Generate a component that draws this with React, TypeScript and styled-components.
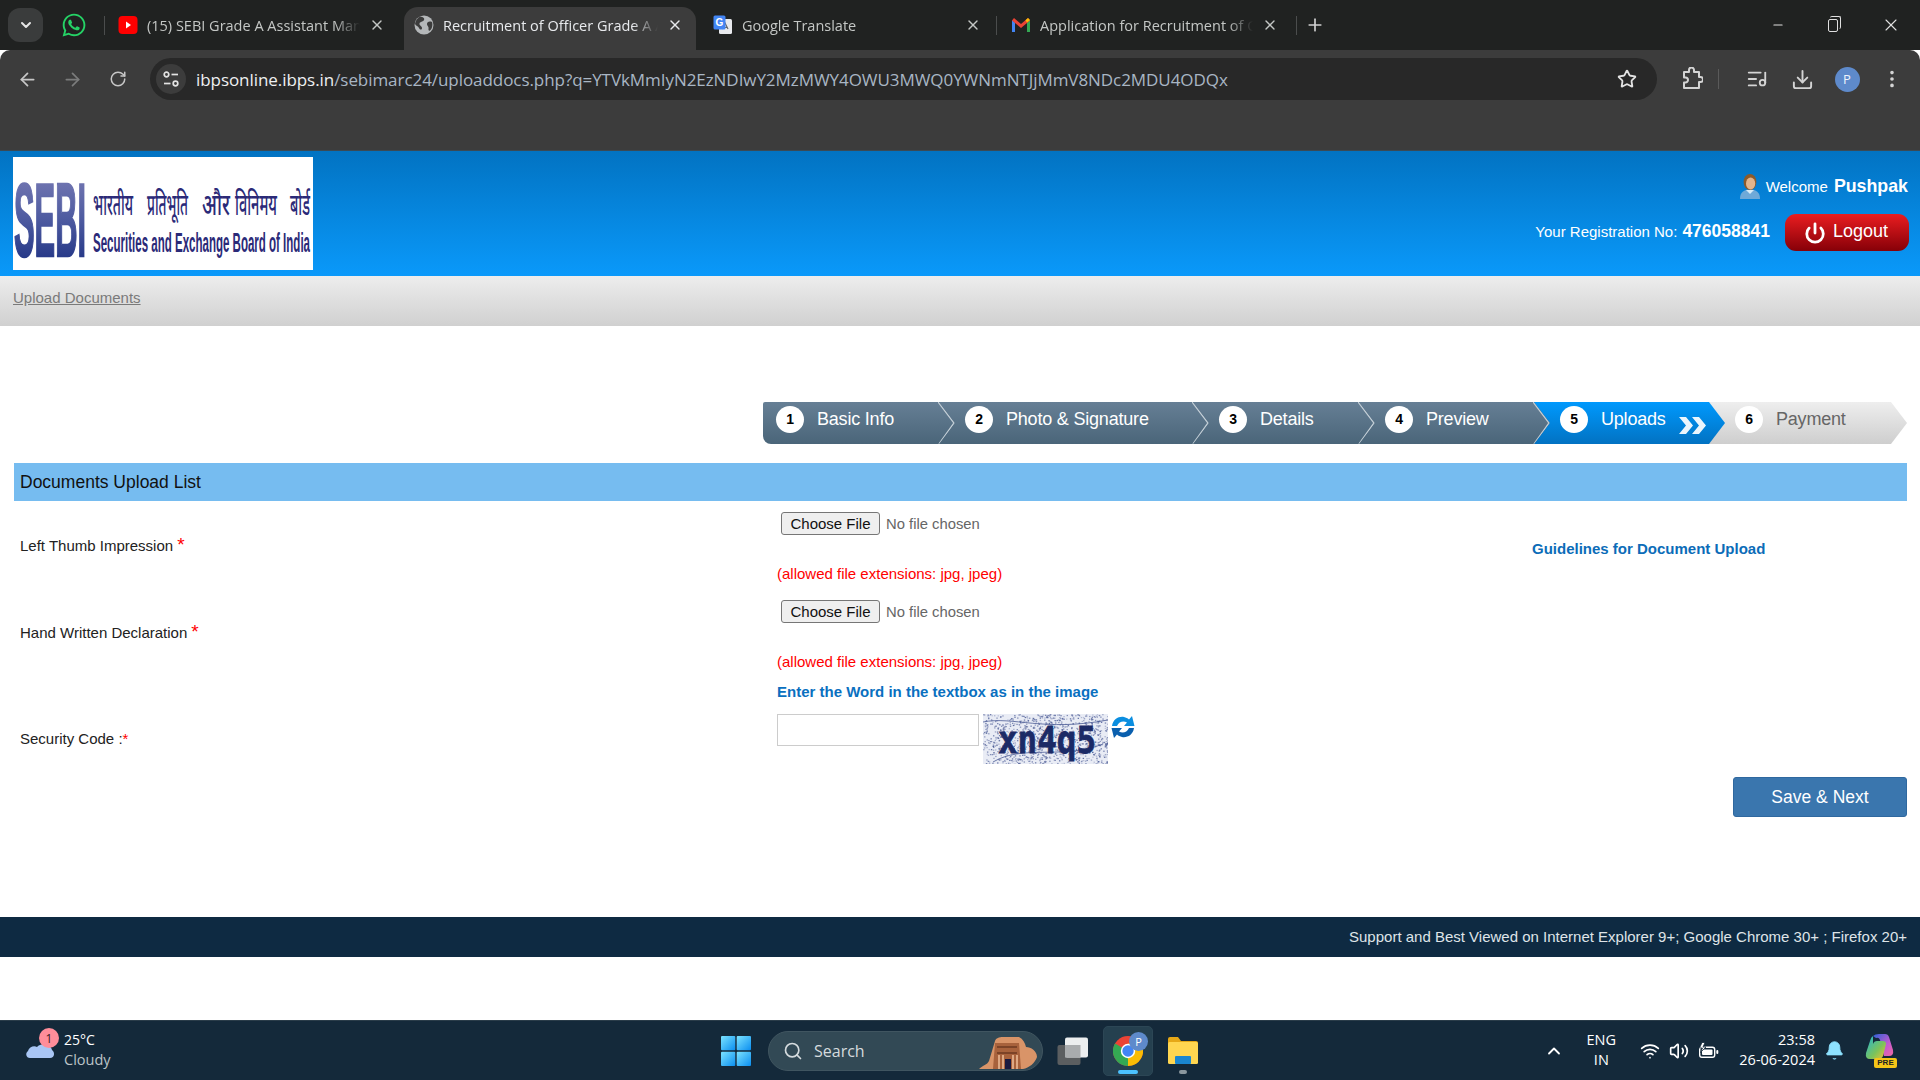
import styled, { createGlobalStyle } from "styled-components"
import {
  ArrowLeft,
  ArrowRight,
  Bell,
  ChevronDown,
  ChevronUp,
  Download,
  ListMusic,
  Minus,
  MoreVertical,
  Plus,
  Power,
  RotateCw,
  Search as SearchGlyph,
  Star,
  Volume2,
  Wifi,
  X,
} from "lucide-react"
import { FaWhatsapp } from "react-icons/fa"

const GlobalStyle = createGlobalStyle`
  html, body {
    margin: 0;
    padding: 0;
    height: 100%;
    overflow: hidden;
    background: #fff;
    font-family: "Liberation Sans", Arial, sans-serif;
  }
  * { box-sizing: border-box; }
`

const CHROME_FONT = `"Open Sans", "Noto Sans", sans-serif`

const Shell = styled.div`
  width: 1920px;
  height: 1080px;
  display: flex;
  flex-direction: column;
`

/* browser chrome */

const TabStrip = styled.div`
  height: 50px;
  flex: none;
  background: #202221;
  display: flex;
  align-items: flex-end;
  padding-left: 8px;
  font-family: ${CHROME_FONT};
`

const TabSearch = styled.div`
  width: 35px;
  height: 34px;
  margin-bottom: 8px;
  border-radius: 12px;
  background: #3a3c3c;
  color: #e6e6e6;
  display: flex;
  align-items: center;
  justify-content: center;
`

const PinnedTab = styled.div`
  width: 61px;
  height: 50px;
  display: flex;
  align-items: center;
  justify-content: center;
  color: #25d366;
`

const Tab = styled.div<{ $w: number; $l: number; $r: number; $active?: boolean; $sep?: boolean }>`
  position: relative;
  width: ${p => p.$w}px;
  height: ${p => (p.$active ? 43 : 50)}px;
  padding: 0 ${p => p.$r}px ${p => (p.$active ? 7 : 0)}px ${p => p.$l}px;
  display: flex;
  align-items: center;
  gap: 9px;
  font-size: 14.5px;
  color: ${p => (p.$active ? "#e8eaed" : "#c4c7c5")};
  background: ${p => (p.$active ? "#3c3c3c" : "transparent")};
  border-radius: ${p => (p.$active ? "14px 14px 0 0" : "0")};
  &::before {
    content: "";
    display: ${p => (p.$sep ? "block" : "none")};
    position: absolute;
    left: 0;
    top: 16px;
    width: 1px;
    height: 19px;
    background: #4b4d4d;
  }
`

const TabTitle = styled.span`
  flex: 1;
  min-width: 0;
  white-space: nowrap;
  overflow: hidden;
  mask-image: linear-gradient(to right, #000 88%, transparent 100%);
`

const NewTab = styled.div`
  width: 38px;
  height: 50px;
  display: flex;
  align-items: center;
  justify-content: center;
  color: #d0d0d0;
  position: relative;
  &::before {
    content: "";
    position: absolute;
    left: 0;
    top: 16px;
    width: 1px;
    height: 19px;
    background: #4b4d4d;
  }
`

const WindowControls = styled.div`
  margin-left: auto;
  height: 50px;
  padding-right: 19px;
  display: flex;
  align-items: center;
  gap: 43px;
  color: #e0e0e0;
`

const RestoreIcon = styled.span`
  position: relative;
  display: block;
  width: 10px;
  height: 13px;
  border: 1.3px solid #e0e0e0;
  border-radius: 2px;
  &::after {
    content: "";
    position: absolute;
    top: -4px;
    left: 1px;
    width: 10px;
    height: 12px;
    border-top: 1.3px solid #e0e0e0;
    border-right: 1.3px solid #e0e0e0;
    border-radius: 2px;
  }
`

const Toolbar = styled.div`
  height: 100px;
  flex: none;
  background: #3c3c3c;
  border-radius: 10px 10px 0 0;
  padding: 8px 0 0 10px;
  display: flex;
  align-items: flex-start;
  font-family: ${CHROME_FONT};
`

const NavButton = styled.div<{ $dim?: boolean }>`
  width: 45px;
  margin-left: -5px;
  margin-right: 5px;
  height: 42px;
  display: flex;
  align-items: center;
  justify-content: center;
  color: ${p => (p.$dim ? "#7b7c7c" : "#c7c7c7")};
  &:nth-child(3) {
    margin-right: 0;
  }
`

const AddressBar = styled.div`
  margin-left: 10px;
  width: 1507px;
  height: 42px;
  border-radius: 21px;
  background: #282828;
  display: flex;
  align-items: center;
  padding: 0 20px 0 6px;
`

const SiteInfo = styled.div`
  width: 30px;
  height: 30px;
  border-radius: 50%;
  background: #3c3c3c;
  color: #e3e3e3;
  display: flex;
  align-items: center;
  justify-content: center;
  flex: none;
`

const Url = styled.div`
  margin-left: 10px;
  flex: 1;
  font-size: 17px;
  letter-spacing: -0.06px;
  color: #a9b6c4;
  white-space: nowrap;
  overflow: hidden;
  b {
    font-weight: 400;
    color: #eef0f2;
  }
`

const ToolIcons = styled.div`
  margin-left: 21px;
  height: 42px;
  display: flex;
  align-items: center;
  color: #d4d4d4;
`

const ToolSlot = styled.div<{ $w: number }>`
  width: ${p => p.$w}px;
  display: flex;
  align-items: center;
  justify-content: center;
`

const ToolDivider = styled.div`
  width: 1px;
  height: 20px;
  background: #5a5a5a;
  margin: 0 16px 0 12px;
`

const Avatar = styled.div`
  width: 25px;
  height: 25px;
  border-radius: 50%;
  background: #5e8acb;
  color: #eef3fb;
  font-size: 13px;
  display: flex;
  align-items: center;
  justify-content: center;
`

/* site header */

const SiteHeader = styled.header`
  height: 126px;
  flex: none;
  background: linear-gradient(to bottom, #0273c2, #0a99fa);
  border-top: 1px solid #3a4a55;
  padding: 6px 12px 0 13px;
  display: flex;
  justify-content: space-between;
  align-items: flex-start;
  color: #fff;
`

const LogoBox = styled.div`
  width: 300px;
  height: 113px;
  background: #fff;
`

const UserPanel = styled.div`
  padding-top: 15px;
  display: flex;
  flex-direction: column;
  align-items: flex-end;
`

const WelcomeLine = styled.div`
  height: 28px;
  display: flex;
  align-items: center;
  gap: 5px;
  font-size: 15px;
  b {
    font-size: 17.8px;
    margin-left: 1px;
  }
`

const RegLine = styled.div`
  margin-top: 14px;
  display: flex;
  align-items: center;
  font-size: 15px;
  b {
    font-size: 17.5px;
    margin-left: 5px;
  }
`

const RegText = styled.span`
  margin-top: -3px;
`

const LogoutButton = styled.div`
  width: 124px;
  height: 37px;
  margin-left: 15px;
  margin-right: -1px;
  border-radius: 11px;
  background: linear-gradient(to bottom, #ea1d20, #860008);
  display: flex;
  align-items: center;
  padding-left: 19px;
  gap: 7px;
  font-size: 18px;
  span {
    margin-top: -3px;
  }
`

const Breadcrumb = styled.nav`
  height: 50px;
  flex: none;
  background: linear-gradient(to bottom, #ededed, #d0d0d0);
  padding: 13px 0 0 13px;
  font-size: 15px;
  color: #7a7a7a;
  span {
    text-decoration: underline;
  }
`

/* page body */

const Main = styled.main`
  flex: 1;
  display: flex;
  flex-direction: column;
  min-height: 0;
`

const Steps = styled.div`
  margin: 76px 0 0 763px;
  display: flex;
  height: 42px;
`

const Step = styled.div<{ $w: number; $z: number; $first?: boolean; $kind: "done" | "active" | "next" }>`
  position: relative;
  z-index: ${p => p.$z};
  flex: none;
  width: ${p => p.$w}px;
  margin-right: -16px;
  height: 42px;
  padding-left: ${p => (p.$first ? 13 : 26)}px;
  padding-bottom: 8px;
  display: flex;
  align-items: center;
  gap: 13px;
  font-size: 18px;
  letter-spacing: -0.2px;
  color: ${p => (p.$kind === "next" ? "#666" : "#fff")};
  background: ${p =>
    p.$kind === "done"
      ? "linear-gradient(to bottom, #667f95, #4a6579)"
      : p.$kind === "active"
        ? "linear-gradient(to bottom, #0099fd, #0272c2)"
        : "linear-gradient(to bottom, #eeeeee, #cecece)"};
  clip-path: polygon(0 0, calc(100% - 16px) 0, 100% 50%, calc(100% - 16px) 100%, 0 100%);
  border-bottom-left-radius: ${p => (p.$first ? 8 : 0)}px;
  border-top-left-radius: ${p => (p.$first ? 2 : 0)}px;
`

const StepNumber = styled.span`
  width: 28px;
  height: 27px;
  border-radius: 50%;
  background: #fff;
  color: #000;
  font-size: 14px;
  font-weight: 700;
  display: flex;
  align-items: center;
  justify-content: center;
  flex: none;
`

const StepEdge = styled.svg`
  position: absolute;
  right: 0;
  top: 0;
`

const ActiveMark = styled.svg`
  position: absolute;
  right: 17px;
  top: 14px;
`

const SectionBar = styled.h2`
  margin: 19px 13px 0 14px;
  height: 38px;
  background: #76bcf0;
  color: #111;
  font-size: 17.5px;
  font-weight: 400;
  line-height: 38px;
  padding-left: 6px;
`

const FormGrid = styled.div`
  padding: 11px 13px 0 14px;
`

const FormRow = styled.div<{ $h: number; $labelTop: number }>`
  display: grid;
  grid-template-columns: 763px 755px 1fr;
  height: ${p => p.$h}px;
  --label-top: ${p => p.$labelTop}px;
`

const FieldLabel = styled.div`
  padding: var(--label-top) 0 0 6px;
  font-size: 15px;
  color: #222;
  em {
    font-style: normal;
    color: #f00;
    font-size: 19px;
    margin-left: 4px;
    line-height: 10px;
  }
`

const FileField = styled.div`
  display: flex;
  flex-direction: column;
`

const FilePick = styled.div`
  margin-left: 4px;
  display: flex;
  align-items: center;
  gap: 6px;
  font-size: 14.8px;
  color: #666;
`

const ChooseButton = styled.button`
  width: 99px;
  height: 23px;
  padding: 0;
  border: 1px solid #767676;
  border-radius: 3px;
  background: #efefef;
  color: #111;
  font: 400 15px "Liberation Sans", Arial, sans-serif;
`

const AllowedNote = styled.div`
  margin-top: 30px;
  font-size: 15px;
  color: #f00;
`

const GuideLink = styled.div`
  padding-top: 28px;
  font-size: 15px;
  font-weight: 700;
  color: #0b6cb8;
`

const CaptchaHint = styled.div`
  margin: 3px 0 0 763px;
  font-size: 15px;
  font-weight: 700;
  line-height: 17px;
  color: #0a70bf;
`

const CaptchaRow = styled.div`
  margin-top: 14px;
  display: grid;
  grid-template-columns: 763px 1fr;
  align-items: center;
  height: 50px;
`

const SecurityLabel = styled.div`
  padding: 0 0 2px 6px;
  font-size: 15px;
  color: #222;
  span {
    color: #f00;
  }
`

const CaptchaField = styled.div`
  display: flex;
  align-items: flex-start;
`

const CaptchaInput = styled.input`
  width: 202px;
  height: 32px;
  border: 1px solid #ccc;
  background: #fff;
  padding: 0 6px;
`

const CaptchaPicture = styled.svg`
  margin-left: 4px;
  display: block;
`

const RefreshIcon = styled.svg`
  margin-left: 3px;
  margin-top: 1px;
`

const SaveRow = styled.div`
  display: flex;
  justify-content: flex-end;
  margin: 13px 13px 0 0;
`

const SaveButton = styled.div`
  width: 174px;
  height: 40px;
  border-radius: 3px;
  background: #3a76ae;
  border: 1px solid #2f689f;
  color: #fff;
  font-size: 17.5px;
  display: flex;
  align-items: center;
  justify-content: center;
`

const PageFooter = styled.footer`
  margin-top: 100px;
  height: 40px;
  background: #0e2a42;
  color: #dfe4e8;
  font-size: 15px;
  display: flex;
  align-items: center;
  justify-content: flex-end;
  padding: 0 13px 2px 0;
`

/* windows taskbar */

const Taskbar = styled.div`
  height: 60px;
  flex: none;
  background: #14293a;
  border-top: 1px solid #2a3c49;
  display: flex;
  align-items: center;
  font-family: ${CHROME_FONT};
  color: #fff;
`

const WeatherArea = styled.div`
  width: 721px;
  flex: none;
  display: flex;
  align-items: center;
  padding-left: 25px;
  gap: 9px;
`

const WeatherIcon = styled.div`
  position: relative;
  width: 30px;
  height: 36px;
  margin-top: 3px;
`

const WeatherCloud = styled.svg`
  position: absolute;
  top: 3px;
  left: 0;
`

const NotifyBadge = styled.span`
  position: absolute;
  top: -6px;
  right: -4px;
  width: 20px;
  height: 20px;
  border-radius: 50%;
  background: #ff8d9a;
  color: #3a2024;
  font-size: 12px;
  display: flex;
  align-items: center;
  justify-content: center;
`

const WeatherText = styled.div`
  font-size: 14px;
  line-height: 20px;
  margin-top: -2px;
  small {
    display: block;
    font-size: 14.5px;
    color: #bcc4c8;
  }
`

const CenterIcons = styled.div`
  display: flex;
  align-items: center;
`

const SearchPill = styled.div`
  position: relative;
  margin-left: 17px;
  width: 275px;
  height: 40px;
  border-radius: 20px;
  background: #324955;
  border: 1px solid #405560;
  display: flex;
  align-items: center;
  padding-left: 14px;
  gap: 11px;
  color: #d5dbde;
  font-size: 16px;
`

const SearchArt = styled.svg`
  position: absolute;
  right: 3px;
  top: 3px;
`

const TaskIcon = styled.div<{ $w: number; $active?: boolean }>`
  position: relative;
  width: ${p => p.$w}px;
  height: 50px;
  display: flex;
  align-items: center;
  justify-content: center;
  border-radius: 5px;
  background: ${p => (p.$active ? "#25404f" : "transparent")};
  border: 1px solid ${p => (p.$active ? "#2c4655" : "transparent")};
`

const RunDot = styled.span<{ $w: number; $color: string }>`
  position: absolute;
  bottom: 1px;
  left: 50%;
  transform: translateX(-50%);
  width: ${p => p.$w}px;
  height: 4px;
  border-radius: 2px;
  background: ${p => p.$color};
`

const ProfileBadge = styled.span`
  position: absolute;
  top: 5px;
  right: 4px;
  width: 19px;
  height: 19px;
  border-radius: 50%;
  background: #5e8acb;
  font-size: 11px;
  display: flex;
  align-items: center;
  justify-content: center;
`

const Tray = styled.div`
  margin-left: auto;
  display: flex;
  align-items: center;
  color: #fff;
`

const TrayLang = styled.div`
  width: 58px;
  margin-left: 8px;
  text-align: center;
  font-size: 14.5px;
  line-height: 20px;
  margin-top: -2px;
`

const TrayIcons = styled.div`
  margin-left: 10px;
  display: flex;
  align-items: center;
  gap: 9px;
`

const Clock = styled.div`
  margin-left: 20px;
  text-align: right;
  font-size: 14.5px;
  line-height: 20px;
  margin-top: -2px;
`

const BellSlot = styled.div`
  margin-left: 9px;
  color: #8ee2ff;
  display: flex;
`

const CopilotSlot = styled.div`
  position: relative;
  margin: 0 23px 0 20px;
  width: 32px;
  height: 34px;
`

const PreTag = styled.span`
  position: absolute;
  right: 0;
  bottom: 0;
  width: 23px;
  height: 10px;
  border-radius: 2px;
  background: #f5c518;
  color: #222;
  font-size: 8px;
  line-height: 10px;
  font-weight: 700;
  text-align: center;
  font-family: "Liberation Sans", Arial, sans-serif;
`

/* drawings */

function YoutubeIcon() {
  return (
    <svg width="20" height="20" viewBox="0 0 20 20">
      <rect x="0.5" y="1" width="19" height="18" rx="4" fill="#f00" />
      <path d="M8 6.5 L13 10 L8 13.5 Z" fill="#fff" />
    </svg>
  )
}

function SiteGlobe() {
  return (
    <svg width="20" height="20" viewBox="0 0 20 20">
      <circle cx="10" cy="10" r="9.5" fill="#b4b7b9" />
      <path d="M6 1.5 C9 2 11 3 10 5 C9 7 6 6.5 5.5 8.5 C5 10.5 8 11 8 13 C8 15 6 15 5 13 C4 11 2 11 1 9 C1.5 6 3 3 6 1.5 Z" fill="#3c3c3c" />
      <path d="M18 7 C15 6 13 7 13 9 C13 11 15 11 14.5 14 C14.3 15.5 15 16 16 15.5 C18 14 19 10 18 7 Z" fill="#3c3c3c" />
    </svg>
  )
}

function TranslateIcon() {
  return (
    <svg width="20" height="20" viewBox="0 0 20 20">
      <rect x="6" y="4" width="13" height="15" rx="1.5" fill="#e8eaed" />
      <path d="M9 14l3-6 3 6M10 12.5h4" stroke="#5f6368" strokeWidth="1.2" fill="none" />
      <rect x="0.5" y="0.5" width="12" height="14" rx="1.5" fill="#4285f4" />
      <text x="6.5" y="11" fontSize="10" fontWeight="700" textAnchor="middle" fill="#fff" fontFamily="Liberation Sans">
        G
      </text>
    </svg>
  )
}

function GmailIcon() {
  return (
    <svg width="20" height="16" viewBox="0 0 20 16">
      <path d="M1 15V3l3 2.5V15z" fill="#4285f4" />
      <path d="M16 15V5.5L19 3v12z" fill="#34a853" />
      <path d="M1 3.5 L3 1 L10 7 L17 1 L19 3.5 L10 11z" fill="#ea4335" />
      <path d="M16 5.5 L19 3 L17 1 L14.5 3.2z" fill="#fbbc04" />
    </svg>
  )
}

function TuneIcon() {
  return (
    <svg width="18" height="18" viewBox="0 0 18 18" fill="none" stroke="currentColor" strokeWidth="1.7">
      <circle cx="4.5" cy="4.5" r="2.3" />
      <path d="M9.5 4.5 H16" />
      <path d="M2 13.5 H8.5" />
      <circle cx="13.5" cy="13.5" r="2.3" />
    </svg>
  )
}

function ExtensionIcon() {
  return (
    <svg width="22" height="24" viewBox="0 0 22 24" fill="none" stroke="currentColor" strokeWidth="2" strokeLinejoin="round">
      <path d="M3 5 H8 V3 A2.5 2.5 0 0 1 13 3 V5 H18 V10 H19.5 A2.5 2.5 0 0 1 19.5 15 H18 V21 H3 V15.5 H4.5 A2.5 2.5 0 0 0 4.5 10.5 H3 Z" />
    </svg>
  )
}

function UserAvatar() {
  return (
    <svg width="22" height="27" viewBox="0 0 22 27">
      <path d="M1 26 C1 19 5 16.5 11 16.5 C17 16.5 21 19 21 26 Z" fill="#6fa9d8" />
      <path d="M7 17 L11 21 L15 17 Z" fill="#d9ecf8" />
      <ellipse cx="11" cy="9" rx="6.4" ry="8" fill="#8a5a2b" />
      <ellipse cx="11.6" cy="10.5" rx="4.6" ry="6" fill="#e2b48c" />
    </svg>
  )
}

const HINDI_WORDS = [
  { word: "भारतीय", x: 80, w: 40 },
  { word: "प्रतिभूति", x: 134, w: 41 },
  { word: "और", x: 189, w: 28 },
  { word: "विनिमय", x: 222, w: 42 },
  { word: "बोर्ड", x: 277, w: 20 },
]

function SebiLogo() {
  return (
    <svg width="300" height="113" viewBox="0 0 300 113">
      <defs>
        <linearGradient id="sebiFill" x1="0" y1="0" x2="0" y2="1">
          <stop offset="0" stopColor="#8081b8" />
          <stop offset="0.5" stopColor="#4d5aa0" />
          <stop offset="1" stopColor="#13287c" />
        </linearGradient>
      </defs>
      <text
        x="1"
        y="99"
        fontFamily="Liberation Sans"
        fontWeight="700"
        fontSize="104"
        textLength="72"
        lengthAdjust="spacingAndGlyphs"
        fill="url(#sebiFill)"
        stroke="url(#sebiFill)"
        strokeWidth="2.5"
      >
        SEBI
      </text>
      <g transform="translate(0,58) scale(1,1.5)">
        {HINDI_WORDS.map(h => (
          <text
            key={h.word}
            x={h.x}
            y="0"
            fontFamily="Noto Sans Devanagari, Noto Sans, Lohit Devanagari, sans-serif"
            fontSize="20"
            fontWeight="500"
            textLength={h.w}
            lengthAdjust="spacingAndGlyphs"
            fill="#2b2a78"
          >
            {h.word}
          </text>
        ))}
      </g>
      <text
        x="80"
        y="95"
        fontFamily="Liberation Sans"
        fontWeight="700"
        fontSize="27"
        textLength="217"
        lengthAdjust="spacingAndGlyphs"
        fill="#2b2a78"
      >
        Securities and Exchange Board of India
      </text>
    </svg>
  )
}

function seeded(n: number) {
  const x = Math.sin(n * 12.9898) * 43758.5453
  return x - Math.floor(x)
}

const NOISE = Array.from({ length: 1100 }, (_, i) => ({
  x: seeded(i + 1) * 125,
  y: seeded(i + 1000) * 50,
  o: 0.25 + seeded(i + 2000) * 0.6,
}))

function CaptchaImage() {
  return (
    <CaptchaPicture width="125" height="50" viewBox="0 0 125 50">
      <rect width="125" height="50" fill="#e9ecf5" />
      {NOISE.map((d, i) => (
        <rect key={i} x={d.x} y={d.y} width="1.4" height="1.2" fill="#4a5a94" opacity={d.o} />
      ))}
      <path d="M0 8 C30 2 60 18 125 6 M10 48 C40 30 80 46 120 30" stroke="#4a5a94" strokeWidth="0.8" fill="none" />
      <text
        x="15"
        y="39"
        fontFamily="DejaVu Sans Mono"
        fontWeight="700"
        fontSize="37"
        textLength="98"
        lengthAdjust="spacingAndGlyphs"
        fill="#1b2a66"
        stroke="#1b2a66"
        strokeWidth="0.8"
      >
        xn4q5
      </text>
    </CaptchaPicture>
  )
}

function CaptchaRefresh() {
  return (
    <RefreshIcon width="24" height="24" viewBox="0 0 24 24">
      <path
        d="M1 11 C2 4 8 1 13 2 C15 2.4 16.5 3.2 18 4.5 L21 1 L23.5 11 L13 11 L16 7.5 C12.5 5.5 8 6.5 6 11 Z"
        fill="#0b8ee0"
      />
      <path
        d="M23 13 C22 20 16 23 11 22 C9 21.6 7.5 20.8 6 19.5 L3 23 L0.5 13 L11 13 L8 16.5 C11.5 18.5 16 17.5 18 13 Z"
        fill="#0a5fae"
      />
    </RefreshIcon>
  )
}

function WindowsLogo() {
  return (
    <svg width="30" height="30" viewBox="0 0 30 30">
      <defs>
        <linearGradient id="winFill" x1="0" y1="0" x2="1" y2="1">
          <stop offset="0" stopColor="#7ce3ff" />
          <stop offset="1" stopColor="#0a8ef0" />
        </linearGradient>
      </defs>
      <rect x="0" y="0" width="14.3" height="14.3" rx="1" fill="url(#winFill)" />
      <rect x="15.7" y="0" width="14.3" height="14.3" rx="1" fill="url(#winFill)" />
      <rect x="0" y="15.7" width="14.3" height="14.3" rx="1" fill="url(#winFill)" />
      <rect x="15.7" y="15.7" width="14.3" height="14.3" rx="1" fill="url(#winFill)" />
    </svg>
  )
}

function TaskViewIcon() {
  return (
    <svg width="32" height="28" viewBox="0 0 32 28">
      <rect x="0.5" y="8" width="23" height="20" rx="2" fill="#5b5e60" />
      <rect x="8" y="0.5" width="23" height="20" rx="2" fill="#eceeef" />
      <rect x="8" y="8" width="15.5" height="12.5" fill="#a9acae" />
    </svg>
  )
}

function ChromeLogo() {
  return (
    <svg width="30" height="30" viewBox="0 0 30 30">
      <circle cx="15" cy="15" r="15" fill="#ea4335" />
      <path d="M15 15 L2 7.5 A15 15 0 0 0 15 30 Z" fill="#34a853" />
      <path d="M15 15 L15 30 A15 15 0 0 0 28 7.5 L15 7.5 Z" fill="#fbbc04" />
      <circle cx="15" cy="15" r="7.2" fill="#fff" />
      <circle cx="15" cy="15" r="5.7" fill="#4285f4" />
    </svg>
  )
}

function ExplorerIcon() {
  return (
    <svg width="30" height="27" viewBox="0 0 30 27">
      <path d="M0 2 Q0 0 2 0 H10 L13 4 H28 Q30 4 30 6 V10 H0 Z" fill="#e6a817" />
      <rect x="0" y="5" width="30" height="22" rx="1.5" fill="#ffd650" />
      <rect x="7" y="19" width="16" height="8" rx="1" fill="#1a86d0" />
    </svg>
  )
}

function TempleArt() {
  return (
    <SearchArt width="60" height="34" viewBox="0 0 60 34">
      <path d="M0 34 C4 30 8 30 10 26 L16 6 C17 3 20 2 24 2 H40 C44 4 46 8 47 12 C52 12 58 16 58 22 C56 28 50 33 44 34 Z" fill="#d99468" />
      <path d="M16 8 H40 L42 34 H14 Z" fill="#a8623c" />
      <path d="M18 12 H38 M18 18 H38" stroke="#6e3a20" strokeWidth="1.5" />
      <path d="M20 20 V34 M24 20 V34 M34 20 V34 M38 20 V34" stroke="#f0c09a" strokeWidth="1.5" />
      <rect x="26" y="24" width="6" height="10" fill="#1a1a40" />
    </SearchArt>
  )
}

function BatteryCharge() {
  return (
    <svg width="21" height="18" viewBox="0 0 21 18" fill="none">
      <rect x="1.7" y="5.2" width="15" height="10" rx="2.2" stroke="#fff" strokeWidth="1.4" />
      <rect x="4" y="7.5" width="10.5" height="5.5" rx="1" fill="#fff" />
      <rect x="18.3" y="8" width="2" height="4" rx="1" fill="#fff" />
      <path d="M4 0.5 L1.5 6 H4.5 L2.5 10.5 L8 5 H5 L7 0.5 Z" fill="#fff" stroke="#14293a" strokeWidth="0.8" />
    </svg>
  )
}

function CopilotMark() {
  return (
    <svg width="29" height="27" viewBox="0 0 29 27">
      <defs>
        <linearGradient id="copA" x1="0" y1="0" x2="1" y2="1">
          <stop offset="0" stopColor="#1fb6d8" />
          <stop offset="0.6" stopColor="#7cc35a" />
          <stop offset="1" stopColor="#f2c230" />
        </linearGradient>
        <linearGradient id="copB" x1="0" y1="0" x2="1" y2="1">
          <stop offset="0" stopColor="#2a62d8" />
          <stop offset="0.6" stopColor="#c45ad0" />
          <stop offset="1" stopColor="#f06aa0" />
        </linearGradient>
      </defs>
      <path d="M8 2 Q10 0 14 0 H20 Q23 0 24 3 L28 16 Q29 22 24 22 H19 L15 6 Q14 3 11 4 Z" fill="url(#copB)" />
      <path d="M8 2 Q6 3 5 7 L1 19 Q0 25 5 25 H13 Q17 25 18 22 L21 10 Q21 7 18 7 H12 Q9 7 8 10 Z" fill="url(#copA)" />
    </svg>
  )
}

type TabInfo = {
  title: string
  icon: React.ReactNode
  w: number
  l: number
  r: number
  active?: boolean
  sep?: boolean
}

const TABS: TabInfo[] = [
  { title: "(15) SEBI Grade A Assistant Manager", icon: <YoutubeIcon />, w: 300, l: 14, r: 19, sep: true },
  { title: "Recruitment of Officer Grade A Assistant", icon: <SiteGlobe />, w: 292, l: 10, r: 13, active: true },
  { title: "Google Translate", icon: <TranslateIcon />, w: 300, l: 17, r: 15 },
  { title: "Application for Recruitment of Officer", icon: <GmailIcon />, w: 300, l: 15, r: 18, sep: true },
]

type StepInfo = {
  n: number
  label: string
  w: number
  kind: "done" | "active" | "next"
}

const STEPS: StepInfo[] = [
  { n: 1, label: "Basic Info", w: 192, kind: "done" },
  { n: 2, label: "Photo & Signature", w: 270, kind: "done" },
  { n: 3, label: "Details", w: 182, kind: "done" },
  { n: 4, label: "Preview", w: 191, kind: "done" },
  { n: 5, label: "Uploads", w: 191, kind: "active" },
  { n: 6, label: "Payment", w: 198, kind: "next" },
]

function BrowserChrome() {
  return (
    <>
      <TabStrip>
        <TabSearch>
          <ChevronDown size={16} strokeWidth={3} />
        </TabSearch>
        <PinnedTab>
          <FaWhatsapp size={26} />
        </PinnedTab>
        {TABS.map(t => (
          <Tab key={t.title} $w={t.w} $l={t.l} $r={t.r} $active={t.active} $sep={t.sep}>
            {t.icon}
            <TabTitle>{t.title}</TabTitle>
            <X size={16} strokeWidth={2} />
          </Tab>
        ))}
        <NewTab>
          <Plus size={20} />
        </NewTab>
        <WindowControls>
          <Minus size={14} />
          <RestoreIcon />
          <X size={20} strokeWidth={1.3} />
        </WindowControls>
      </TabStrip>
      <Toolbar>
        <NavButton>
          <ArrowLeft size={21} />
        </NavButton>
        <NavButton $dim>
          <ArrowRight size={21} />
        </NavButton>
        <NavButton>
          <RotateCw size={18} />
        </NavButton>
        <AddressBar>
          <SiteInfo>
            <TuneIcon />
          </SiteInfo>
          <Url>
            <b>ibpsonline.ibps.in</b>/sebimarc24/uploaddocs.php?q=YTVkMmIyN2EzNDIwY2MzMWY4OWU3MWQ0YWNmNTJjMmV8NDc2MDU4ODQx
          </Url>
          <Star size={20} color="#e3e3e3" strokeWidth={2.2} />
        </AddressBar>
        <ToolIcons>
          <ToolSlot $w={28}>
            <ExtensionIcon />
          </ToolSlot>
          <ToolDivider />
          <ToolSlot $w={44}>
            <ListMusic size={22} />
          </ToolSlot>
          <ToolSlot $w={46}>
            <Download size={23} />
          </ToolSlot>
          <ToolSlot $w={44}>
            <Avatar>P</Avatar>
          </ToolSlot>
          <ToolSlot $w={46}>
            <MoreVertical size={22} />
          </ToolSlot>
        </ToolIcons>
      </Toolbar>
    </>
  )
}

function WindowsTaskbar() {
  return (
    <Taskbar>
      <WeatherArea>
        <WeatherIcon>
          <WeatherCloud width="30" height="24" viewBox="0 0 30 24">
            <path d="M5 21 C1 21 0 16 3 14 C4 10 9 8 12 10 C16 5 26 7 27 13 C30 15 30 21 25 21 Z" fill="#a9c6f5" />
          </WeatherCloud>
          <NotifyBadge>1</NotifyBadge>
        </WeatherIcon>
        <WeatherText>
          25°C
          <small>Cloudy</small>
        </WeatherText>
      </WeatherArea>
      <CenterIcons>
        <WindowsLogo />
        <SearchPill>
          <SearchGlyph size={20} />
          Search
          <TempleArt />
        </SearchPill>
        <TaskIcon $w={60}>
          <TaskViewIcon />
        </TaskIcon>
        <TaskIcon $w={50} $active>
          <ChromeLogo />
          <ProfileBadge>P</ProfileBadge>
          <RunDot $w={20} $color="#4cc2ff" />
        </TaskIcon>
        <TaskIcon $w={60}>
          <ExplorerIcon />
          <RunDot $w={8} $color="#8b979e" />
        </TaskIcon>
      </CenterIcons>
      <Tray>
        <ChevronUp size={20} strokeWidth={2.2} />
        <TrayLang>
          ENG
          <br />
          IN
        </TrayLang>
        <TrayIcons>
          <Wifi size={20} />
          <Volume2 size={20} />
          <BatteryCharge />
        </TrayIcons>
        <Clock>
          23:58
          <br />
          26-06-2024
        </Clock>
        <BellSlot>
          <Bell size={21} fill="#8ee2ff" strokeWidth={1} />
        </BellSlot>
        <CopilotSlot>
          <CopilotMark />
          <PreTag>PRE</PreTag>
        </CopilotSlot>
      </Tray>
    </Taskbar>
  )
}

function FileUploadRow({ label, guide }: { label: string; guide?: boolean }) {
  return (
    <FormRow $h={guide ? 88 : 80} $labelTop={guide ? 25 : 24}>
      <FieldLabel>
        {label}
        <em>*</em>
      </FieldLabel>
      <FileField>
        <FilePick>
          <ChooseButton type="button">Choose File</ChooseButton>
          No file chosen
        </FilePick>
        <AllowedNote>(allowed file extensions: jpg, jpeg)</AllowedNote>
      </FileField>
      {guide && <GuideLink>Guidelines for Document Upload</GuideLink>}
    </FormRow>
  )
}

export default function App() {
  return (
    <Shell>
      <GlobalStyle />
      <BrowserChrome />
      <SiteHeader>
        <LogoBox>
          <SebiLogo />
        </LogoBox>
        <UserPanel>
          <WelcomeLine>
            <UserAvatar />
            <span>Welcome</span>
            <b>Pushpak</b>
          </WelcomeLine>
          <RegLine>
            <RegText>Your Registration No:</RegText>
            <RegText>
              <b>476058841</b>
            </RegText>
            <LogoutButton>
              <Power size={22} strokeWidth={3} />
              <span>Logout</span>
            </LogoutButton>
          </RegLine>
        </UserPanel>
      </SiteHeader>
      <Breadcrumb>
        <span>Upload Documents</span>
      </Breadcrumb>
      <Main>
        <Steps>
          {STEPS.map((s, i) => (
            <Step key={s.n} $w={s.w} $z={10 - i} $first={i === 0} $kind={s.kind}>
              <StepNumber>{s.n}</StepNumber>
              {s.label}
              {s.kind === "done" && (
                <StepEdge width="17" height="42" viewBox="0 0 17 42">
                  <path d="M0 0 L16 21 L1 42" fill="none" stroke="#c3ced6" strokeWidth="1.3" />
                </StepEdge>
              )}
              {s.kind === "active" && (
                <ActiveMark width="30" height="19" viewBox="0 0 30 19">
                  <path d="M1 1 L8 1 L15 9.5 L8 18 L1 18 L8 9.5 Z M14 1 L21 1 L28 9.5 L21 18 L14 18 L21 9.5 Z" fill="#fff" opacity="0.92" />
                </ActiveMark>
              )}
            </Step>
          ))}
        </Steps>
        <SectionBar>Documents Upload List</SectionBar>
        <FormGrid>
          <FileUploadRow label="Left Thumb Impression" guide />
          <FileUploadRow label="Hand Written Declaration" />
          <CaptchaHint>Enter the Word in the textbox as in the image</CaptchaHint>
          <CaptchaRow>
            <SecurityLabel>
              Security Code :<span>*</span>
            </SecurityLabel>
            <CaptchaField>
              <CaptchaInput type="text" />
              <CaptchaImage />
              <CaptchaRefresh />
            </CaptchaField>
          </CaptchaRow>
        </FormGrid>
        <SaveRow>
          <SaveButton>Save &amp; Next</SaveButton>
        </SaveRow>
        <PageFooter>Support and Best Viewed on Internet Explorer 9+; Google Chrome 30+ ; Firefox 20+</PageFooter>
      </Main>
      <WindowsTaskbar />
    </Shell>
  )
}
